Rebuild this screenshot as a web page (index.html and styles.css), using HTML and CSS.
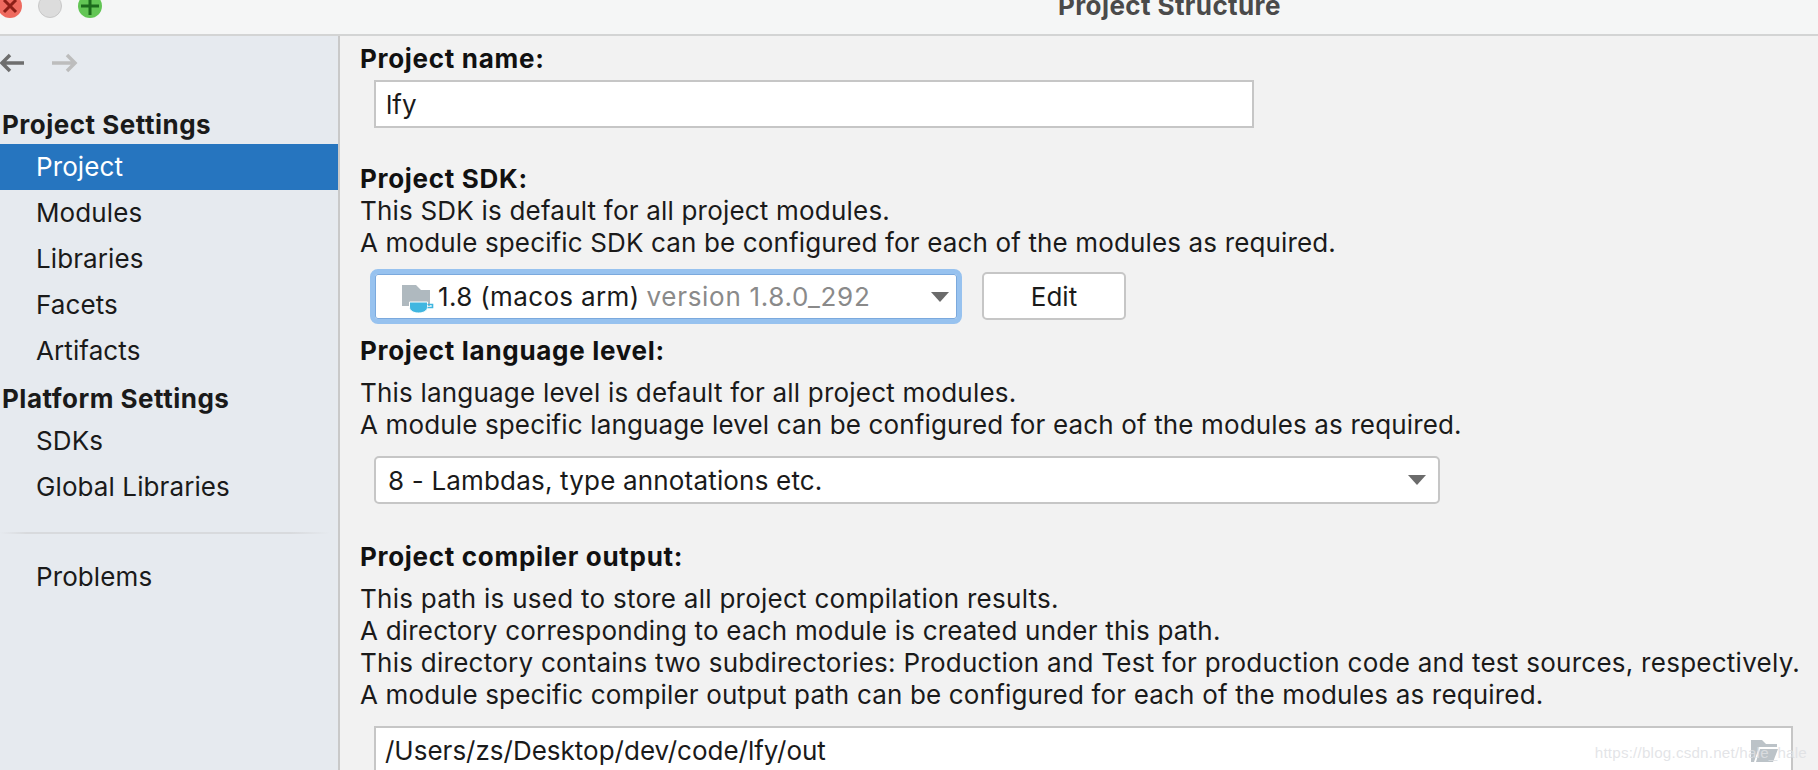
FILE: index.html
```html
<!DOCTYPE html>
<html lang="en">
<head>
<meta charset="utf-8">
<title>Project Structure</title>
<link rel="stylesheet" href="styles.css">
</head>
<body>
<header class="titlebar">
  <div class="lights">
    <span class="light red"><svg viewBox="0 0 24 24"><path d="M6 6L18 18M18 6L6 18" stroke="#8c1f17" stroke-width="3"/></svg></span>
    <span class="light grey"></span>
    <span class="light green"><svg viewBox="0 0 24 24"><path d="M12 3V21M3 12H21" stroke="#1c6b1c" stroke-width="3"/></svg></span>
  </div>
  <div class="title">Project Structure</div>
</header>
<div class="body">
  <aside class="sidebar">
    <div class="nav">
      <svg class="arrow" viewBox="0 0 26 20"><path d="M25 10H3M11 2L3 10L11 18" fill="none" stroke="#6e6e6e" stroke-width="3.5"/></svg>
      <svg class="arrow" viewBox="0 0 26 20"><path d="M0 10H23M15 2L23 10L15 18" fill="none" stroke="#bdbdbd" stroke-width="3.5"/></svg>
    </div>
    <div class="group">Project Settings</div>
    <div class="item selected">Project</div>
    <div class="item">Modules</div>
    <div class="item">Libraries</div>
    <div class="item">Facets</div>
    <div class="item">Artifacts</div>
    <div class="group second">Platform Settings</div>
    <div class="item">SDKs</div>
    <div class="item">Global Libraries</div>
    <div class="sep"></div>
    <div class="item">Problems</div>
  </aside>
  <main class="main">
    <h2 class="label">Project name:</h2>
    <div class="field name">lfy</div>
    <h2 class="label sdk">Project SDK:</h2>
    <p class="line">This SDK is default for all project modules.</p>
    <p class="line tight">A module specific SDK can be configured for each of the modules as required.</p>
    <div class="sdk-row">
      <div class="combo focused">
        <svg class="jdk" viewBox="0 0 32 28"><path d="M0 0H14L19 5H28V21H0Z" fill="#afb9bf"/><path d="M7.500 17H25.500V22C25.500 26 21 28 16.500 28C12 28 7.500 26 7.500 22Z" fill="#40b6e0" stroke="#fff" stroke-width="1"/><path d="M25.500 19.500H30.500V22.500H25.500" fill="none" stroke="#40b6e0" stroke-width="1.600"/></svg>
        <span>1.8 (macos arm)</span><span class="muted">version 1.8.0_292</span>
        <i class="caret"></i>
      </div>
      <div class="button">Edit</div>
    </div>
    <h2 class="label lang">Project language level:</h2>
    <p class="line first">This language level is default for all project modules.</p>
    <p class="line tight">A module specific language level can be configured for each of the modules as required.</p>
    <div class="combo level">8 - Lambdas, type annotations etc.<i class="caret"></i></div>
    <h2 class="label out">Project compiler output:</h2>
    <p class="line first loose">This path is used to store all project compilation results.</p>
    <p class="line">A directory corresponding to each module is created under this path.</p>
    <p class="line loose">This directory contains two subdirectories: Production and Test for production code and test sources, respectively.</p>
    <p class="line snug">A module specific compiler output path can be configured for each of the modules as required.</p>
    <div class="field path">/Users/zs/Desktop/dev/code/lfy/out
      <svg class="folder" viewBox="0 0 27 22"><path d="M0 0H11L15 4H26V7H8L3 22H0ZM9 9H27L22 22H5Z" fill="#bcc3c8"/></svg>
      <span class="watermark">https://blog.csdn.net/hale_hale</span>
    </div>
  </main>
</div>
</body>
</html>
```
FILE: styles.css
```css
* { box-sizing: border-box; }
html, body { margin: 0; height: 770px; overflow: hidden; }
body { font-family: Inter, "Noto Sans", sans-serif; font-size: 26px; color: #1a1a1a; background: #f2f2f2; }

.titlebar { height: 36px; background: #f5f6f6; border-bottom: 2px solid #d3d4d4; display: flex; position: relative; overflow: hidden; }
.lights { display: flex; gap: 16px; margin-left: -2px; margin-top: -6px; }
.light { width: 24px; height: 24px; border-radius: 50%; display: block; }
.light svg { display: block; width: 24px; height: 24px; }
.red { background: #ee6a5f; }
.grey { background: #dcdcdc; border: 1px solid #c8c8c8; }
.green { background: #62c554; }
.title { position: absolute; left: 1058px; top: -9px; font-weight: 700; color: #4a4a4a; font-size: 26px; letter-spacing: .4px; line-height: 30px; }

.body { display: flex; height: 734px; }
.sidebar { width: 340px; background: #e6eaef; border-right: 2px solid #c9c9c9; flex: none; letter-spacing: .1px; }
.nav { height: 53px; display: flex; align-items: center; gap: 27px; margin-left: -1px; }
.arrow { width: 26px; height: 20px; display: block; }
.group { font-weight: 700; height: 36px; line-height: 34px; padding-left: 2px; margin-top: 19px; letter-spacing: .5px; }
.group.second { margin-top: 6px; height: 38px; line-height: 38px; }
.item { height: 46px; line-height: 46px; padding-left: 36px; }
.item.selected { background: #2675bf; color: #fff; width: 338px; }
.sep { height: 2px; margin: 22px 8px 20px 0; background: linear-gradient(to right, #e6eaef, #d8dadd 8%, #d8dadd 88%, #e6eaef); }

.main { flex: 1; padding-left: 20px; min-width: 0; }
.label { font-size: 26px; font-weight: 700; margin: 0; line-height: 32px; color: #111; letter-spacing: .7px; }
.main > .label:first-child { margin-top: 7px; }
.line { margin: 0; line-height: 32px; letter-spacing: .2px; }
.line.tight { letter-spacing: .14px; }
.line.snug { letter-spacing: .17px; }
.line.loose { letter-spacing: .26px; }
.label.sdk { margin-top: 35px; }
.label.lang { margin-top: 11px; }
.label.out { margin-top: 37px; }
.line.first { margin-top: 10px; }
.field { background: #fff; border: 2px solid #c6c6c6; height: 48px; line-height: 46px; margin-left: 14px; padding-left: 10px; position: relative; }
.field.name { width: 880px; margin-top: 5px; }
.field.path { width: 1419px; margin-top: 15px; padding-left: 9px; }
.sdk-row { display: flex; align-items: center; gap: 20px; margin: 10px 0 0 10px; }
.combo { background: #fff; border: 2px solid #c6c6c6; border-radius: 5px; height: 48px; display: flex; align-items: center; position: relative; padding-left: 12px; }
.combo.focused { width: 592px; height: 55px; border: 5px solid #97c2ef; box-shadow: inset 0 0 0 1px #7ba9dd; border-radius: 8px; padding-left: 27px; gap: 7px; letter-spacing: .35px; }
.combo.focused .caret { right: 8px; }
.combo.level { width: 1066px; margin: 15px 0 0 14px; letter-spacing: .18px; }
.muted { color: #8a8a8a; letter-spacing: .7px; }
.jdk { width: 32px; height: 28px; flex: none; margin: 5px -3px 0 0; }
.caret { position: absolute; right: 12px; top: 50%; margin-top: -5px; width: 0; height: 0; border-left: 9px solid transparent; border-right: 9px solid transparent; border-top: 10px solid #6b6b6b; }
.button { background: #fff; border: 2px solid #c6c6c6; border-radius: 5px; width: 144px; height: 48px; line-height: 46px; text-align: center; margin-bottom: 2px; }
.folder { position: absolute; right: 13px; top: 12px; width: 27px; height: 22px; }
.watermark { position: absolute; right: -16px; top: 2px; font-family: "Liberation Sans", sans-serif; font-size: 15.200px; color: rgba(222,224,227,.85); letter-spacing: .2px; }
```
